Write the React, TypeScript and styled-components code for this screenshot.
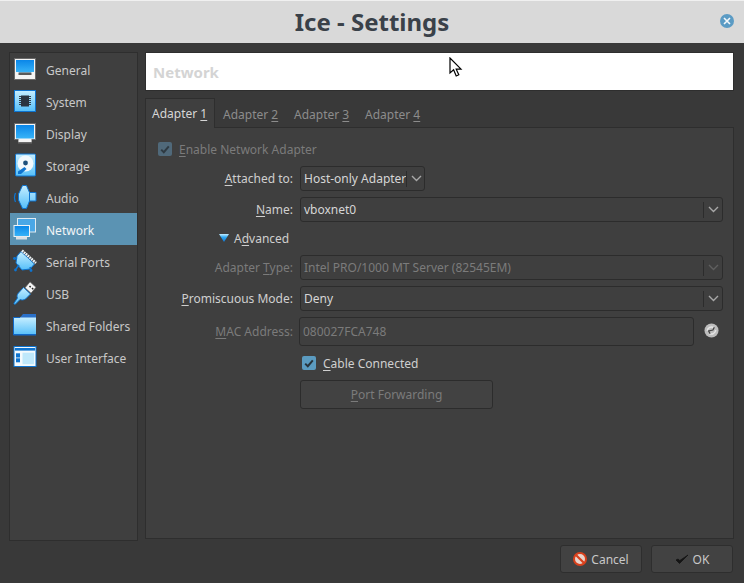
import { ReactNode } from 'react';
import styled, { createGlobalStyle } from 'styled-components';

const GlobalStyle = createGlobalStyle`
  html, body {
    margin: 0;
    padding: 0;
    background: #393939;
  }
  body {
    font-family: "Noto Sans", "Liberation Sans", sans-serif;
    font-size: 12px;
  }
`;

const Window = styled.div`
  position: relative;
  width: 744px;
  height: 583px;
  overflow: hidden;
  background: #393939;
  display: flex;
  flex-direction: column;
`;

const TitleBar = styled.div`
  position: relative;
  height: 43px;
  flex: none;
  box-sizing: border-box;
  border-top: 1px solid #f0f0f0;
  background: #d9d9d9;
  display: flex;
  align-items: center;
  justify-content: center;
`;

const TitleText = styled.h1`
  margin: 0;
  font-size: 24px;
  font-weight: 700;
  color: #3a4149;
  line-height: 42px;
`;

const CloseButton = styled.div`
  position: absolute;
  right: 10px;
  top: 13px;
  width: 14px;
  height: 14px;
  border-radius: 50%;
  background: #5b9bc4;
  display: flex;
  align-items: center;
  justify-content: center;
`;

const Body = styled.div`
  display: flex;
  gap: 7px;
  padding: 9px 10px 0 9px;
  height: 498px;
  box-sizing: border-box;
`;

const Sidebar = styled.div`
  width: 129px;
  height: 489px;
  flex: none;
  box-sizing: border-box;
  background: #3f3f3f;
  border: 1px solid #2e2e2e;
`;

const SideItem = styled.div<{ $active?: boolean }>`
  height: 32px;
  display: flex;
  align-items: center;
  gap: 9px;
  padding-left: 3px;
  color: ${(p) => (p.$active ? '#f2f5f7' : '#c8c8c8')};
  background: ${(p) => (p.$active ? '#5b93b3' : 'transparent')};
`;

const SideLabel = styled.span`
  padding-top: 2px;
`;

const SideIcon = styled.svg`
  width: 24px;
  height: 24px;
  flex: none;
`;

const Main = styled.div`
  flex: 1;
  display: flex;
  flex-direction: column;
  min-width: 0;
`;

const Header = styled.div`
  height: 39px;
  flex: none;
  box-sizing: border-box;
  background: #ffffff;
  border: 1px solid #2e2e2e;
  padding-left: 7px;
  color: #d4d4d4;
  font-size: 15px;
  font-weight: 700;
  line-height: 39px;
`;

const TabRow = styled.div`
  display: flex;
  height: 29px;
  flex: none;
  margin-top: 7px;
`;

const Tab = styled.div<{ $active?: boolean }>`
  box-sizing: border-box;
  flex: none;
  width: ${(p) => (p.$active ? '70px' : '71px')};
  height: ${(p) => (p.$active ? '30px' : '29px')};
  padding: ${(p) => (p.$active ? '0 0 0 6px' : '4px 0 0 8px')};
  display: flex;
  align-items: center;
  color: ${(p) => (p.$active ? '#d6d6d6' : '#8c8c8c')};
  background: ${(p) => (p.$active ? '#3f3f3f' : 'transparent')};
  border: ${(p) => (p.$active ? '1px solid #2e2e2e' : 'none')};
  border-bottom: none;
  position: relative;
  z-index: 1;
`;

const Panel = styled.div`
  height: 412px;
  flex: none;
  box-sizing: border-box;
  background: #3f3f3f;
  border: 1px solid #2e2e2e;
  padding: 11px 10px 0 12px;
`;

const Key = styled.u`
  text-decoration: underline;
  text-underline-offset: 2px;
`;

const CheckRow = styled.div<{ $muted?: boolean; $indent?: number; $top?: number }>`
  display: flex;
  align-items: center;
  gap: 7px;
  height: 20px;
  margin-left: ${(p) => p.$indent ?? 0}px;
  margin-top: ${(p) => p.$top ?? 0}px;
  color: ${(p) => (p.$muted ? '#7b7b7b' : '#cfcfcf')};
`;

const Check = styled.div<{ $muted?: boolean }>`
  width: 14px;
  height: 14px;
  border-radius: 2px;
  background: ${(p) => (p.$muted ? '#50697a' : '#5b9bc0')};
  display: flex;
  align-items: center;
  justify-content: center;
`;

const FormRow = styled.div<{ $top: number }>`
  display: grid;
  grid-template-columns: 135px 1fr;
  column-gap: 7px;
  align-items: center;
  margin-top: ${(p) => p.$top}px;
`;

const Label = styled.div<{ $muted?: boolean }>`
  text-align: right;
  color: ${(p) => (p.$muted ? '#7b7b7b' : '#cfcfcf')};
`;

const Combo = styled.div<{ $muted?: boolean; $narrow?: boolean }>`
  box-sizing: border-box;
  height: 25px;
  width: ${(p) => (p.$narrow ? '125px' : '423px')};
  border: 1px solid #2c2c2c;
  border-radius: 3px;
  display: flex;
  align-items: center;
  padding-left: 3px;
  color: ${(p) => (p.$muted ? '#7b7b7b' : '#d6d6d6')};
`;

const ComboText = styled.span`
  flex: 1;
  white-space: nowrap;
`;

const ComboArrow = styled.div<{ $muted?: boolean }>`
  width: 18px;
  height: 16px;
  flex: none;
  border-left: 1px solid #2c2c2c;
  display: flex;
  align-items: center;
  justify-content: center;
  color: ${(p) => (p.$muted ? '#5f5f5f' : '#a8a8a8')};
`;

const Advanced = styled.div`
  display: flex;
  align-items: center;
  gap: 5px;
  margin: 6px 0 0 61px;
  height: 20px;
  color: #cfcfcf;
`;

const MacInput = styled.div`
  box-sizing: border-box;
  width: 395px;
  height: 29px;
  margin-left: -1px;
  border: 1px solid #2c2c2c;
  border-radius: 3px;
  padding-left: 3px;
  line-height: 27px;
  color: #7b7b7b;
`;

const MacField = styled.div`
  display: flex;
  align-items: flex-start;
  gap: 10px;
`;

const RefreshIcon = styled.svg`
  width: 15px;
  height: 15px;
  margin-top: 6px;
  flex: none;
`;

const PortButton = styled.div`
  box-sizing: border-box;
  width: 193px;
  height: 29px;
  margin: 7px 0 0 142px;
  border: 1px solid #2c2c2c;
  border-radius: 3px;
  background: #424242;
  color: #7b7b7b;
  display: flex;
  align-items: center;
  justify-content: center;
`;

const Footer = styled.div`
  display: flex;
  justify-content: flex-end;
  gap: 9px;
  padding: 4px 11px 0 0;
`;

const FootButton = styled.div<{ $width: number }>`
  box-sizing: border-box;
  width: ${(p) => p.$width}px;
  height: 28px;
  border: 1px solid #2e2e2e;
  border-radius: 3px;
  background: #424242;
  color: #c8c8c8;
  display: flex;
  align-items: center;
  justify-content: center;
  gap: 4px;
`;

const Cursor = styled.svg`
  position: absolute;
  left: 449px;
  top: 57px;
  width: 14px;
  height: 21px;
`;

const Chevron = () => (
  <svg width="11" height="7" viewBox="0 0 11 7">
    <path d="M1 1l4.5 4.5L10 1" fill="none" stroke="currentColor" strokeWidth="1.4" />
  </svg>
);

const Tick = ({ color }: { color: string }) => (
  <svg width="10" height="9" viewBox="0 0 10 9">
    <path d="M1.2 4.6l2.6 2.6L8.8 1.4" fill="none" stroke={color} strokeWidth="2" />
  </svg>
);

const IconDefs = () => (
  <svg width="0" height="0" style={{ position: 'absolute' }}>
    <defs>
      <linearGradient id="blue" x1="0" y1="0" x2="0" y2="1">
        <stop offset="0" stopColor="#0a86e8" />
        <stop offset="1" stopColor="#38b4f8" />
      </linearGradient>
      <linearGradient id="pale" x1="0" y1="0" x2="0" y2="1">
        <stop offset="0" stopColor="#c6eeff" />
        <stop offset="1" stopColor="#55bff9" />
      </linearGradient>
      <linearGradient id="arrow" x1="0" y1="0" x2="0" y2="1">
        <stop offset="0" stopColor="#c6eeff" />
        <stop offset="0.4" stopColor="#2ea8f3" />
        <stop offset="1" stopColor="#0e74d0" />
      </linearGradient>
    </defs>
  </svg>
);

const GeneralIcon = () => (
  <SideIcon viewBox="0 0 24 24">
    <rect x="1.5" y="1.5" width="21" height="21" fill="#f4f4f4" stroke="#6a6a6a" />
    <rect x="3" y="3" width="18" height="12.5" fill="url(#blue)" />
    <path d="M5.5 15.5v2.5h13v-2.5z" fill="#5a5a5a" />
    <path d="M2 15.5h3.5M18.5 15.5H22" stroke="#f4f4f4" />
  </SideIcon>
);

const SystemIcon = () => (
  <SideIcon viewBox="0 0 24 24">
    <rect x="1.5" y="1.5" width="21" height="21" fill="url(#pale)" stroke="#0e74d0" />
    <rect x="8" y="6.5" width="8" height="11" fill="#2b3540" />
    <path d="M6 7.5h2M6 9.5h2M6 11.5h2M6 13.5h2M6 15.5h2M16 7.5h2M16 9.5h2M16 11.5h2M16 13.5h2M16 15.5h2" stroke="#35404a" strokeWidth="1" />
  </SideIcon>
);

const DisplayIcon = () => (
  <SideIcon viewBox="0 0 24 24">
    <path d="M5 18h14v4.5H5z" fill="#6a6a6a" />
    <rect x="1.5" y="2.5" width="21" height="16" fill="#f4f4f4" stroke="#6a6a6a" />
    <path d="M5.5 18h13v3h-13z" fill="#f4f4f4" />
    <rect x="3" y="4" width="18" height="13.5" fill="url(#blue)" />
  </SideIcon>
);

const StorageIcon = () => (
  <SideIcon viewBox="0 0 24 24">
    <rect x="2.5" y="1" width="20" height="22" rx="1" fill="url(#pale)" stroke="#0e74d0" />
    <circle cx="12.5" cy="10.5" r="8" fill="#f2f8fc" />
    <circle cx="12.5" cy="10" r="2.4" fill="#1c4f7c" />
    <path d="M5 18.5l6.5-4.5 2 2L8 21H5z" fill="#0e74d0" />
  </SideIcon>
);

const AudioIcon = () => (
  <SideIcon viewBox="0 0 24 24">
    <path d="M2.5 8a11 11 0 0 0 0 9" fill="none" stroke="#0e74d0" strokeWidth="1.3" />
    <path d="M5.5 9L9.5.5h4l3 7h6.5v8.5h-6.5l-3 7.5h-4L5.5 15z" fill="url(#pale)" stroke="#0e74d0" />
    <path d="M16.5 7.5v8.5" stroke="#0e74d0" />
  </SideIcon>
);

const NetworkIcon = () => (
  <SideIcon viewBox="0 0 24 24">
    <rect x="4.5" y="1.5" width="18" height="13.5" fill="#4aa7e6" stroke="#dfeaf1" />
    <rect x="1" y="8.5" width="15.5" height="11" fill="url(#blue)" stroke="#eef3f6" />
    <rect x="3" y="19.5" width="11" height="3" fill="#d8dfe4" />
  </SideIcon>
);

const SerialIcon = () => (
  <SideIcon viewBox="0 0 24 24">
    <path d="M8 2.5l13.5 12.5-4.5 5-8 1-6-7 1-7z" fill="url(#pale)" stroke="#0e74d0" />
    <path d="M9 1.5L23 14" stroke="#eef4f8" strokeWidth="2.6" strokeDasharray="1.8 .7" />
    <path d="M6 16l-3 4M17 18l1 3M4 10L1 9" stroke="#0e74d0" strokeWidth="1.6" />
    <circle cx="2.5" cy="21" r="1.4" fill="#0e74d0" />
    <circle cx="18" cy="21.5" r="1.4" fill="#0e74d0" />
    <circle cx="1.5" cy="9.5" r="1.4" fill="#0e74d0" />
  </SideIcon>
);

const UsbIcon = () => (
  <SideIcon viewBox="0 0 24 24">
    <path d="M17 .8l6 5.5-5 6-6-5.5z" fill="#f4f4f4" stroke="#555" strokeWidth="0.7" />
    <path d="M16.5 5l1.2 1.2M19 7l1.2 1.2" stroke="#222" strokeWidth="1.5" />
    <path d="M10.5 6.5l7 6.5-5 5c-2 1.2-3.8 1.2-5.5.5L2 23.5.8 22.5l3.7-5.5c-.8-1.8-.3-3.6 1-5z" fill="url(#pale)" stroke="#0e74d0" strokeWidth="0.9" />
  </SideIcon>
);

const FolderIcon = () => (
  <SideIcon viewBox="0 0 24 24">
    <path d="M7 4.5L10 1h13v5H7z" fill="#2a70c8" />
    <path d="M.5 4.5h22.5V22H.5z" fill="url(#pale)" />
    <path d="M.5 4.5H7M.5 4.5V22H23" fill="none" stroke="#1068c8" />
    <path d="M.5 21.5H23" stroke="#1068c8" />
  </SideIcon>
);

const InterfaceIcon = () => (
  <SideIcon viewBox="0 0 24 24">
    <rect x="1" y="1.5" width="22" height="20" fill="#f4fafd" stroke="#0e74d0" />
    <rect x="2" y="3" width="20" height="2.6" fill="#0e74d0" />
    <rect x="3" y="8.3" width="4" height="4.2" fill="#0e74d0" />
    <rect x="3" y="13.3" width="4" height="4" fill="#0e74d0" />
    <rect x="9.5" y="7.7" width="11.5" height="11.5" fill="#bfe8fb" />
  </SideIcon>
);

const sections: { name: string; icon: ReactNode }[] = [
  { name: 'General', icon: <GeneralIcon /> },
  { name: 'System', icon: <SystemIcon /> },
  { name: 'Display', icon: <DisplayIcon /> },
  { name: 'Storage', icon: <StorageIcon /> },
  { name: 'Audio', icon: <AudioIcon /> },
  { name: 'Network', icon: <NetworkIcon /> },
  { name: 'Serial Ports', icon: <SerialIcon /> },
  { name: 'USB', icon: <UsbIcon /> },
  { name: 'Shared Folders', icon: <FolderIcon /> },
  { name: 'User Interface', icon: <InterfaceIcon /> },
];

const App = () => {
  return (
    <Window>
      <GlobalStyle />
      <IconDefs />
      <TitleBar>
        <TitleText>Ice - Settings</TitleText>
        <CloseButton>
          <svg width="8" height="8" viewBox="0 0 8 8">
            <path d="M1 1l6 6M7 1L1 7" stroke="#f4f8fb" strokeWidth="1.6" />
          </svg>
        </CloseButton>
      </TitleBar>
      <Body>
        <Sidebar>
          {sections.map((s) => (
            <SideItem key={s.name} $active={s.name === 'Network'}>
              {s.icon}
              <SideLabel>{s.name}</SideLabel>
            </SideItem>
          ))}
        </Sidebar>
        <Main>
          <Header>Network</Header>
          <TabRow>
            <Tab $active>
              <span>
                Adapter <Key>1</Key>
              </span>
            </Tab>
            <Tab>
              <span>
                Adapter <Key>2</Key>
              </span>
            </Tab>
            <Tab>
              <span>
                Adapter <Key>3</Key>
              </span>
            </Tab>
            <Tab>
              <span>
                Adapter <Key>4</Key>
              </span>
            </Tab>
          </TabRow>
          <Panel>
            <CheckRow $muted>
              <Check $muted>
                <Tick color="#2f3a42" />
              </Check>
              <span>
                <Key>E</Key>nable Network Adapter
              </span>
            </CheckRow>
            <FormRow $top={7}>
              <Label>
                <Key>A</Key>ttached to:
              </Label>
              <Combo $narrow>
                <ComboText>Host-only Adapter</ComboText>
                <ComboArrow>
                  <Chevron />
                </ComboArrow>
              </Combo>
            </FormRow>
            <FormRow $top={6}>
              <Label>
                <Key>N</Key>ame:
              </Label>
              <Combo>
                <ComboText>vboxnet0</ComboText>
                <ComboArrow>
                  <Chevron />
                </ComboArrow>
              </Combo>
            </FormRow>
            <Advanced>
              <svg width="10" height="8" viewBox="0 0 10 8">
                <path d="M0 0h10L5 8z" fill="url(#arrow)" />
              </svg>
              <span>
                A<Key>d</Key>vanced
              </span>
            </Advanced>
            <FormRow $top={7}>
              <Label $muted>
                Adapter <Key>T</Key>ype:
              </Label>
              <Combo $muted>
                <ComboText>Intel PRO/1000 MT Server (82545EM)</ComboText>
                <ComboArrow $muted>
                  <Chevron />
                </ComboArrow>
              </Combo>
            </FormRow>
            <FormRow $top={6}>
              <Label>
                <Key>P</Key>romiscuous Mode:
              </Label>
              <Combo>
                <ComboText>Deny</ComboText>
                <ComboArrow>
                  <Chevron />
                </ComboArrow>
              </Combo>
            </FormRow>
            <FormRow $top={6}>
              <Label $muted>
                <Key>M</Key>AC Address:
              </Label>
              <MacField>
                <MacInput>080027FCA748</MacInput>
                <RefreshIcon viewBox="0 0 16 16">
                  <circle cx="8" cy="8" r="7.5" fill="#bdbdbd" />
                  <path d="M3.5 8.5a4.5 4.5 0 0 1 7-3.5M12.5 7.5a4.5 4.5 0 0 1-7 3.5" fill="none" stroke="#e6e6e6" strokeWidth="1.6" />
                  <path d="M11 4.5L9.5 7.5 5 8.5 6.5 11.5" fill="none" stroke="#444" strokeWidth="1.4" />
                </RefreshIcon>
              </MacField>
            </FormRow>
            <CheckRow $indent={144} $top={7}>
              <Check>
                <Tick color="#27333b" />
              </Check>
              <span>
                <Key>C</Key>able Connected
              </span>
            </CheckRow>
            <PortButton>
              <span>
                <Key>P</Key>ort Forwarding
              </span>
            </PortButton>
          </Panel>
        </Main>
      </Body>
      <Footer>
        <FootButton $width={82}>
          <svg width="14" height="14" viewBox="0 0 14 14">
            <circle cx="7" cy="7" r="6" fill="#e8d4cc" stroke="#d8401c" strokeWidth="2" />
            <path d="M3.2 3.2l7.6 7.6" stroke="#d8401c" strokeWidth="2.2" />
          </svg>
          <span>Cancel</span>
        </FootButton>
        <FootButton $width={82}>
          <svg width="14" height="11" viewBox="0 0 14 11">
            <path d="M1 6l3.5 3.5L13 1 4.8 6.5 3 5z" fill="#141414" stroke="#141414" strokeWidth="0.8" />
          </svg>
          <span>OK</span>
        </FootButton>
      </Footer>
      <Cursor viewBox="0 0 14 21">
        <path d="M1 1v15l3.6-3.2L7.2 19l2.6-1.2-2.6-5.6H12z" fill="#fff" stroke="#000" strokeWidth="1.2" />
      </Cursor>
    </Window>
  );
};

export default App;
